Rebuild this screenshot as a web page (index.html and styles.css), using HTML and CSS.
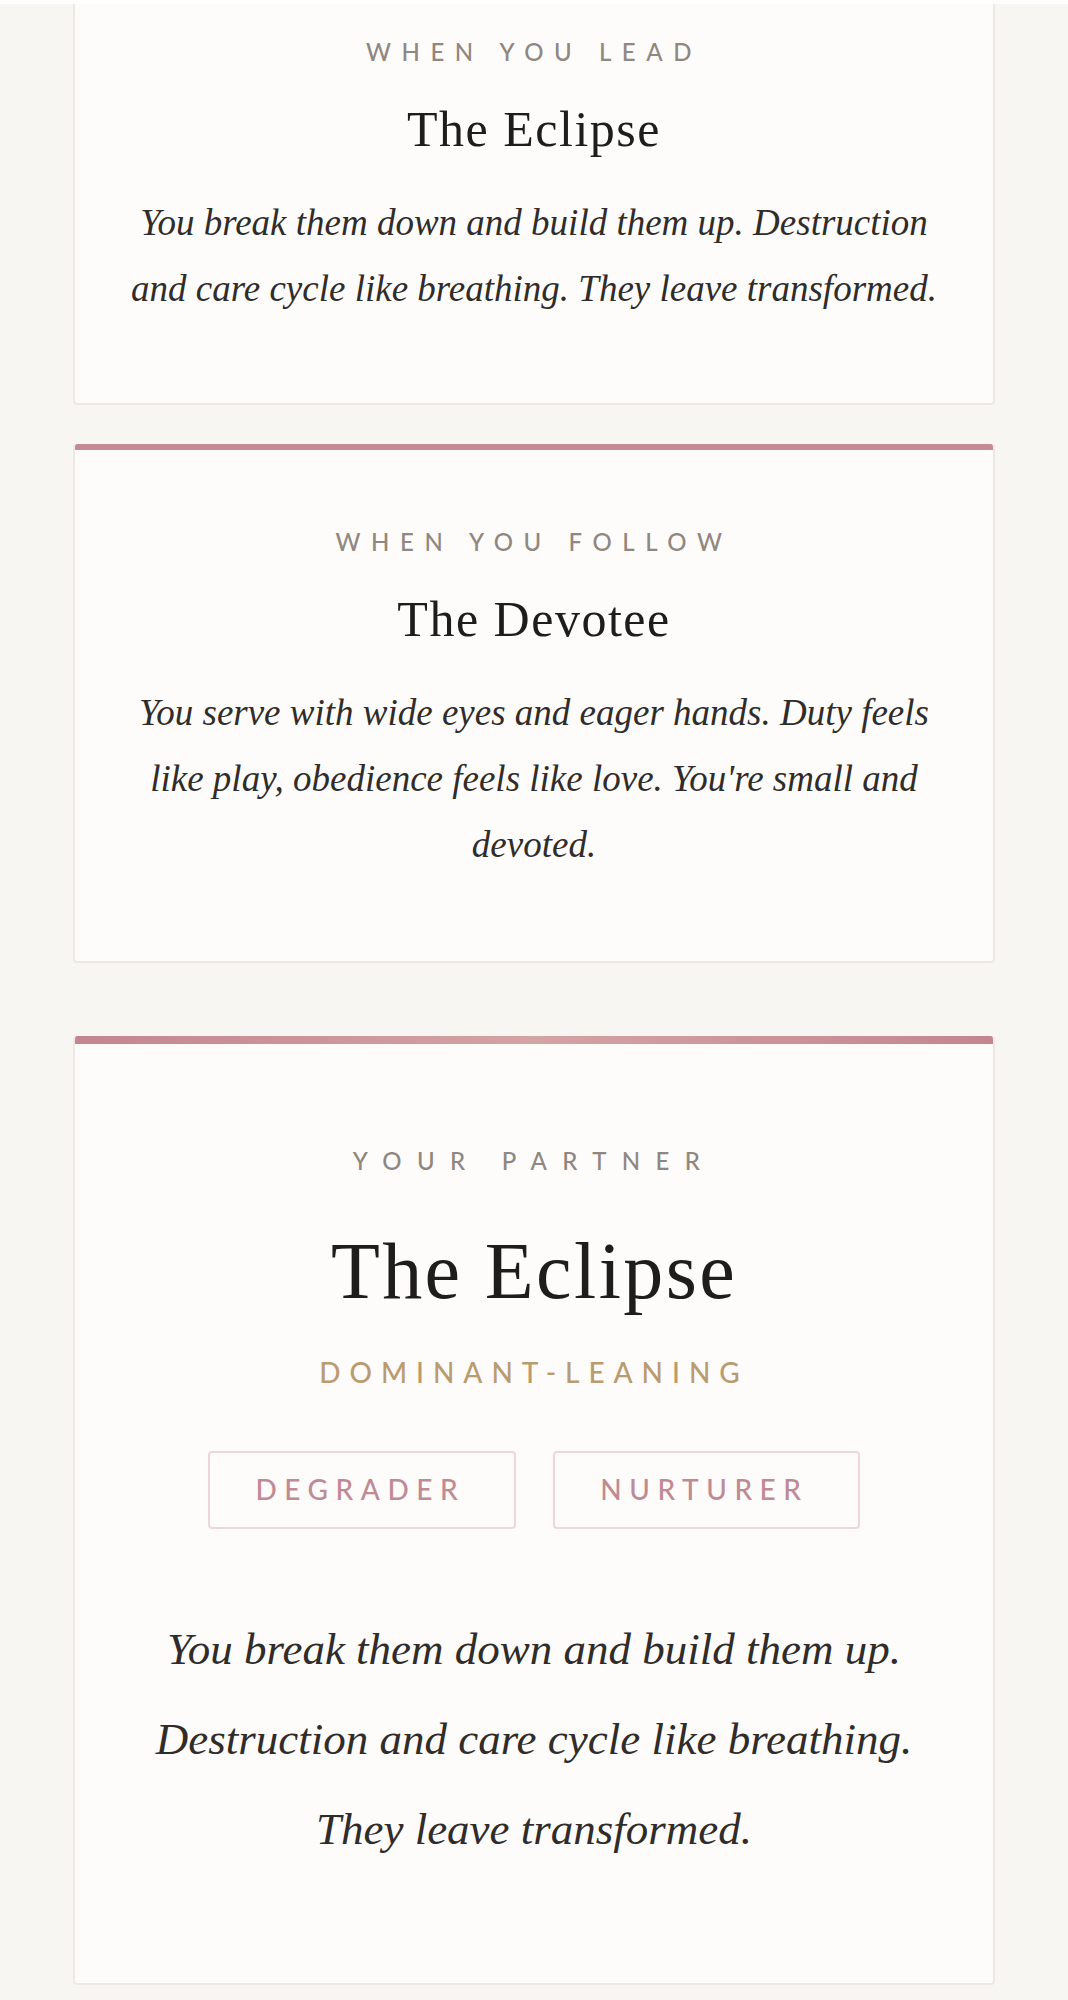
FILE: index.html
```html
<!DOCTYPE html>
<html lang="en">
<head>
<meta charset="utf-8">
<title>Your Results</title>
<link rel="stylesheet" href="styles.css">
</head>
<body>
<div class="topbar"></div>
<main class="page">
  <section class="card card--lead">
    <div class="accent"></div>
    <div class="card-body">
      <p class="label">When you lead</p>
      <h2 class="title">The Eclipse</h2>
      <p class="desc">You break them down and build them up. Destruction and care cycle like breathing. They leave transformed.</p>
    </div>
  </section>

  <section class="card card--follow">
    <div class="accent"></div>
    <div class="card-body card-body--follow">
      <p class="label">When you follow</p>
      <h2 class="title">The Devotee</h2>
      <p class="desc">You serve with wide eyes and eager hands. Duty feels like play, obedience feels like love. You're small and devoted.</p>
    </div>
  </section>

  <section class="card card--partner">
    <div class="accent accent--gradient"></div>
    <div class="card-body card-body--partner">
      <p class="label label--wide">Your partner</p>
      <h2 class="title title--large">The Eclipse</h2>
      <p class="leaning">Dominant-leaning</p>
      <div class="chips">
        <span class="chip">Degrader</span>
        <span class="chip">Nurturer</span>
      </div>
      <p class="desc desc--large">You break them down and build them up. Destruction and care cycle like breathing. They leave transformed.</p>
    </div>
  </section>
</main>
</body>
</html>
```

FILE: styles.css
```css
* {
  box-sizing: border-box;
}

html, body {
  margin: 0;
  padding: 0;
}

body {
  background: #f8f6f3;
  font-family: "Lato", "Liberation Sans", sans-serif;
}

.topbar {
  position: fixed;
  top: 0;
  left: 0;
  right: 0;
  height: 4px;
  background: #ffffff;
  z-index: 10;
}

.page {
  display: flex;
  flex-direction: column;
  padding: 0 73px 40px;
}

.card {
  background: #fdfcfa;
  border: 2px solid #ede8e3;
  border-top: 0;
  border-radius: 4px;
  overflow: hidden;
  text-align: center;
}

.card--lead {
  margin-top: -45px;
}

.card--follow {
  margin-top: 39px;
}

.card--partner {
  margin-top: 73px;
}

.accent {
  height: 6px;
  background: #c48b93;
}

.accent--gradient {
  height: 8px;
  background: linear-gradient(90deg, #c4858f 0%, #d4a3a4 50%, #c4858f 100%);
}

.card-body {
  padding: 77px 48px 81px;
}

.card-body--follow {
  padding: 78px 48px 83px;
}

.card-body--partner {
  padding: 103px 48px 109px;
}

.label {
  margin: 0;
  font-family: "Lato", "Liberation Sans", sans-serif;
  font-size: 24px;
  line-height: 1.2;
  font-weight: 500;
  text-transform: uppercase;
  letter-spacing: 0.44em;
  color: #8f8780;
}

.label--wide {
  letter-spacing: 0.64em;
}

.title {
  margin: 32px 0 0;
  font-family: "Liberation Serif", "Times New Roman", serif;
  font-weight: 400;
  font-size: 50px;
  line-height: 60px;
  letter-spacing: 0.03em;
  color: #1f1d1b;
}

.title--large {
  margin-top: 48px;
  font-size: 80px;
  line-height: 96px;
}

.desc {
  margin: 31px 0 0;
  font-family: "Liberation Serif", "Times New Roman", serif;
  font-style: italic;
  font-size: 37px;
  line-height: 66px;
  color: #302c2a;
}

.desc--large {
  margin-top: 75px;
  font-size: 45px;
  line-height: 90px;
}

.leaning {
  margin: 37px 0 0;
  font-size: 28px;
  line-height: 1.2;
  font-weight: 500;
  text-transform: uppercase;
  letter-spacing: 0.32em;
  color: #b99b6f;
}

.chips {
  display: flex;
  justify-content: center;
  gap: 37px;
  margin-top: 61px;
}

.chip {
  display: block;
  border: 2px solid #ecd8db;
  border-radius: 4px;
  padding: 20px 49px 20px 45px;
  font-size: 28px;
  line-height: 1.2;
  font-weight: 500;
  text-transform: uppercase;
  letter-spacing: 0.27em;
  color: #c08a94;
}
```
